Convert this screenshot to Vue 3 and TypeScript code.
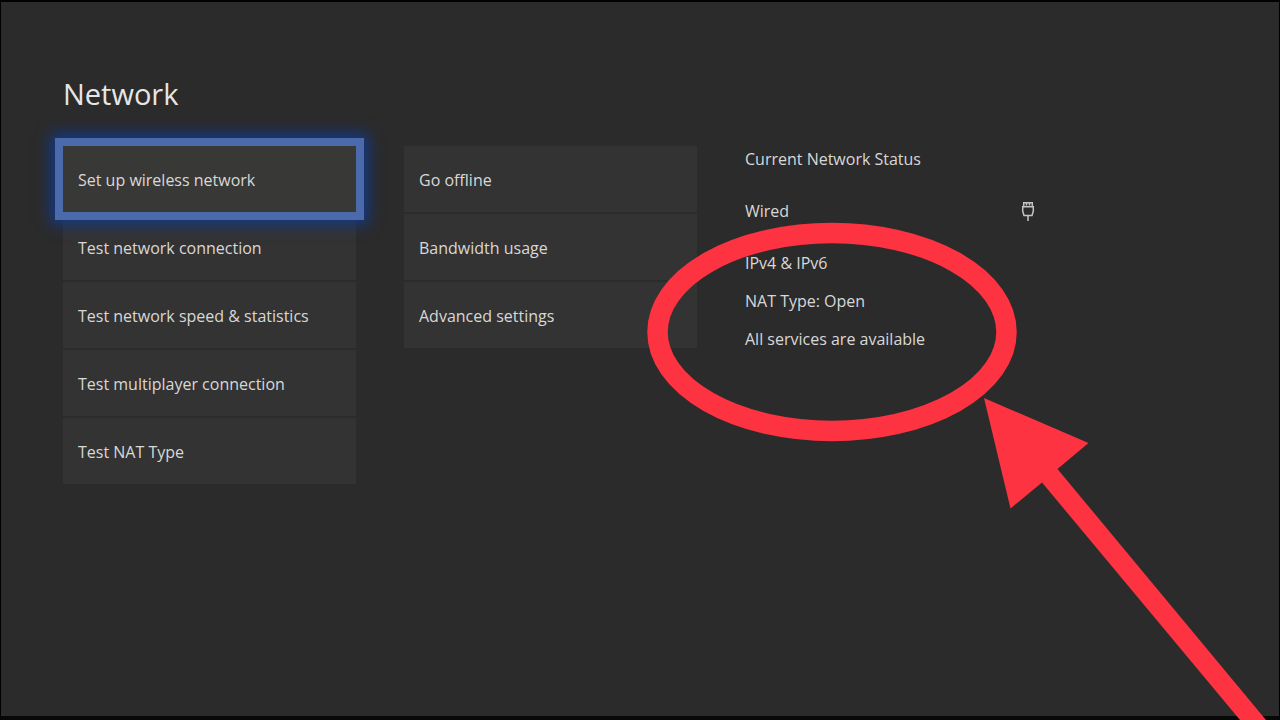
<script setup lang="ts">
import { ref } from 'vue'

const groups: string[][] = [
  [
    'Set up wireless network',
    'Test network connection',
    'Test network speed & statistics',
    'Test multiplayer connection',
    'Test NAT Type',
  ],
  ['Go offline', 'Bandwidth usage', 'Advanced settings'],
]

const details: string[] = ['IPv4 & IPv6', 'NAT Type: Open', 'All services are available']

const selected = ref<string>('Set up wireless network')
</script>

<template>
  <main class="screen">
    <h1 class="title">Network</h1>
    <div class="columns">
      <ul v-for="(group, index) in groups" :key="index" class="menu">
        <li v-for="item in group" :key="item">
          <button
            type="button"
            class="tile"
            :class="{ selected: item === selected }"
            @click="selected = item"
          >
            {{ item }}
          </button>
        </li>
      </ul>
      <section class="status" aria-labelledby="status-heading">
        <h2 id="status-heading" class="heading">Current Network Status</h2>
        <div class="connection">
          <span>Wired</span>
          <svg class="plug" viewBox="0 0 20 26" aria-hidden="true">
            <path d="M5.700 9V4.700h8.600V9M8.500 5v2.500M11.500 5v2.500" />
            <path d="M4.700 8.700h10.600v4.500l-1.300 4.300H6l-1.300-4.300z" />
            <path d="M10 17.700V23" />
          </svg>
        </div>
        <p v-for="line in details" :key="line" class="detail">{{ line }}</p>
      </section>
    </div>
    <svg class="annotation" viewBox="0 0 1280 720" aria-hidden="true">
      <ellipse cx="832" cy="332" rx="174.5" ry="99" />
      <path d="M984 398l104.500 45-31 26L1266 720h-26L1042 482.500l-31.500 26z" />
    </svg>
  </main>
</template>

<style>
body {
  margin: 0;
  background: #2b2b2b;
}
</style>

<style scoped>
.screen {
  position: relative;
  box-sizing: border-box;
  min-height: 100vh;
  padding: 68px 241px 0 62px;
  border: 1px solid #000;
  border-top-width: 2px;
  border-bottom: 4px solid #080808;
  background: #2b2b2b;
  color: #d8d8d8;
  font-family: "Open Sans", "Noto Sans", sans-serif;
  font-size: 16px;
  font-weight: 500;
  line-height: 24px;
}

.title {
  margin: 0 0 28px;
  color: #e6e6e6;
  font-size: 29px;
  font-weight: 400;
  line-height: 48px;
}

.columns {
  display: grid;
  grid-template-columns: repeat(3, 1fr);
  gap: 48px;
  align-items: start;
}

.menu {
  display: grid;
  gap: 2px;
  margin: 0;
  padding: 0;
  list-style: none;
}

.tile {
  display: block;
  width: 100%;
  height: 66px;
  padding: 2px 15px 0;
  border: 0;
  background: #333;
  color: inherit;
  font: inherit;
  text-align: left;
}

.tile.selected {
  position: relative;
  background: #383837;
  outline: 8px solid #4a6aac;
  box-shadow: 0 0 14px 12px #123a8c;
}

.status {
  padding-top: 1px;
}

.heading {
  margin: 0 0 28px;
  font-size: 16px;
  font-weight: 500;
  line-height: 24px;
}

.connection {
  display: flex;
  justify-content: space-between;
  align-items: center;
  margin-bottom: 28px;
}

.plug {
  width: 20px;
  height: 26px;
  margin: -1px 0;
  fill: none;
  stroke: #c4c4c4;
  stroke-width: 1.5;
}

.detail {
  margin: 0 0 14px;
}

.annotation {
  position: absolute;
  top: -2px;
  left: -1px;
  width: calc(100% + 2px);
  height: calc(100% + 6px);
  pointer-events: none;
}

.annotation ellipse {
  fill: none;
  stroke: #fd3341;
  stroke-width: 20.500;
}

.annotation path {
  fill: #fd3341;
}
</style>
